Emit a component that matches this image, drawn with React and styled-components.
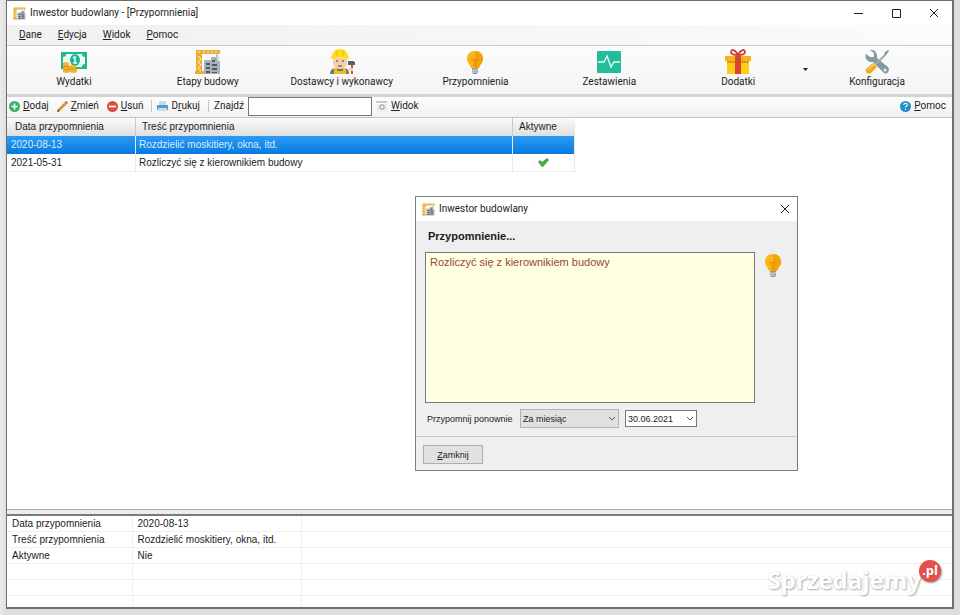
import React, { useState } from 'react';
import styled, { createGlobalStyle } from 'styled-components';

const GlobalStyle = createGlobalStyle`
  * {
    box-sizing: border-box;
  }
  body {
    margin: 0;
    background: #e3e3e3;
    color: #1c1c1c;
    font: 10px/16px "Liberation Sans", Arial, sans-serif;
  }
  button, input, select, textarea {
    font: inherit;
    color: inherit;
    margin: 0;
  }
`

const Desktop = styled.div`
  display: flex;
  min-height: 100vh;
  padding: 0 6px 6px;
  background: linear-gradient(90deg, #ececec, #dedede 6px, #dedede);
`

const AppWindow = styled.div`
  position: relative;
  flex: 1;
  display: flex;
  flex-direction: column;
  background: #fff;
  border: 1px solid #6f6f6f;
  border-width: 1px 2px 2px 1px;
`

const TitleBar = styled.header`
  display: flex;
  align-items: center;
  height: 24px;
  padding: 0 1px 0 6px;
  gap: 4px;
  background: #fff;
  font: 10px/16px Roboto, sans-serif;
`

const Title = styled.h1`
  flex: 1;
  margin: 0;
  font: inherit;
`

const CaptionButton = styled.button`
  display: flex;
  align-items: center;
  justify-content: center;
  width: ${props => props.$width || 34}px;
  height: 24px;
  padding: 0;
  border: 0;
  background: none;
`

const MenuBar = styled.nav`
  display: flex;
  align-items: center;
  height: 20px;
  padding-left: 12px;
  gap: 16px;
  background: linear-gradient(90deg, #f1f1f1, #fbfbfb);
  font: 10px/16px Roboto, sans-serif;
`

const MenuItem = styled.button`
  padding: 0;
  border: 0;
  background: none;
`

const Toolbar = styled.div`
  display: grid;
  grid-template-columns: repeat(7, 1fr);
  height: 52px;
  padding-right: 8px;
  border-top: 1px solid #c9c9c9;
  border-bottom: 3px solid #d3d3d3;
  background: linear-gradient(#fcfcfc, #f4f4f4);
`

const ToolItem = styled.div`
  display: flex;
`

const ToolButton = styled.button`
  flex: 1;
  display: flex;
  flex-direction: column;
  align-items: center;
  padding: 3px 0 0;
  border: 0;
  background: none;
  font: 10px/14px Roboto, sans-serif;
  white-space: nowrap;
`

const DropButton = styled.button`
  width: 10px;
  padding: 0 0 5px;
  border: 0;
  background: none;
`

const ActionBar = styled.div`
  display: flex;
  align-items: center;
  height: 21px;
  padding: 0 6px 2px 2px;
  border-bottom: 1px solid #c4c4c4;
  background: linear-gradient(#fdfdfd, #f1f1f1);
  font: 10px/16px Roboto, sans-serif;
`

const ActionButton = styled.button`
  display: flex;
  align-items: center;
  gap: 3px;
  padding: 0;
  margin-right: ${props => props.$last ? 0 : 8}px;
  margin-left: ${props => props.$end ? 'auto' : 0};
  border: 0;
  background: none;
`

const Divider = styled.span`
  width: 1px;
  height: 12px;
  margin-right: 5px;
  background: #c6c6c6;
`

const FindLabel = styled.label`
  margin-right: 4px;
`

const FindInput = styled.input`
  width: 124px;
  height: 19px;
  margin-right: 4px;
  padding: 0 3px;
  border: 1px solid #777;
  background: #fff;
`

const ListPane = styled.main`
  flex: 1;
  border-bottom: 1px solid #aaa;
`

const List = styled.table`
  width: 568px;
  table-layout: fixed;
  border-collapse: separate;
  border-spacing: 0;
`

const Col = styled.col`
  width: ${props => props.$width}px;
`

const HeadCell = styled.th`
  height: 18px;
  padding: 0 6px;
  border-right: 1px solid #c8c8c8;
  background: linear-gradient(#fafafa, #dfdfdf);
  font-weight: normal;
  text-align: left;
  &:first-child {
    padding-left: 8px;
  }
  &:last-child {
    border-right: 0;
  }
`

const Row = styled.tr`
  color: ${props => props.$selected ? '#d5edff' : 'inherit'};
  background: ${props => props.$selected ? 'linear-gradient(#2b9bf5, #087adf)' : '#fff'};
`

const Cell = styled.td`
  height: 18px;
  padding: 0 3px 0 ${props => props.$first ? 4 : 3}px;
  border-right: 1px solid #e9e9e9;
  border-bottom: ${props => props.$selected ? 0 : '1px solid #f0f0f0'};
  text-align: ${props => props.$center ? 'center' : 'left'};
  svg {
    display: block;
    margin: 0 auto;
  }
`

const Splitter = styled.div`
  height: 4px;
  background: #ededed;
`

const Details = styled.table`
  width: 100%;
  table-layout: fixed;
  border-collapse: collapse;
  border-top: 2px solid #7a7a7a;
  background: #fff;
`

const DetailCell = styled.td`
  height: 16px;
  padding: 0 5px;
  line-height: 15px;
  border-right: 1px solid #f0f0f0;
  border-bottom: 1px solid #f0f0f0;
  &:last-child {
    border-right: 0;
  }
  tr:last-child & {
    height: 12px;
    border-bottom: 0;
  }
`

const Dialog = styled.section`
  position: absolute;
  left: 408px;
  top: 195px;
  width: 383px;
  border: 1px solid #7c7c7c;
  background: #efefef;
`

const DialogTitle = styled.header`
  display: flex;
  align-items: center;
  height: 24px;
  padding-left: 6px;
  gap: 4px;
  background: #fff;
  font: 10px/16px Roboto, sans-serif;
`

const DialogBody = styled.div`
  padding: 7px 15px 8px 9px;
`

const Heading = styled.h2`
  margin: 0 0 8px;
  padding-left: 3px;
  font-size: 11px;
  line-height: 16px;
`

const Message = styled.div`
  display: flex;
  gap: 9px;
`

const MessageText = styled.textarea`
  flex: 1;
  display: block;
  height: 151px;
  padding: 1px 4px;
  border: 1px solid #777;
  background: #ffffe1;
  color: #99463a;
  font-size: 11px;
  outline: 0;
  resize: none;
`

const RemindRow = styled.div`
  display: flex;
  align-items: center;
  margin-top: 6px;
  padding-left: 2px;
  font-size: 9px;
`

const RemindLabel = styled.label`
  flex: 0 0 93px;
  white-space: nowrap;
`

const SelectBox = styled.div`
  display: grid;
  align-items: center;
  width: ${props => props.$width}px;
  margin-right: 6px;
  > * {
    grid-area: 1 / 1;
  }
  svg {
    justify-self: end;
    margin-right: 3px;
    pointer-events: none;
  }
`

const Select = styled.select`
  width: 100%;
  height: ${props => props.$plain ? 17 : 19}px;
  padding: 0 2px;
  border: 1px solid ${props => props.$plain ? '#777' : '#b3b3b3'};
  border-radius: 0;
  background: ${props => props.$plain ? '#fff' : '#e1e1e1'};
  appearance: none;
`

const DialogFooter = styled.footer`
  padding: 8px 7px 6px;
  border-top: 1px solid #c6c6c6;
`

const CloseButton = styled.button`
  display: block;
  width: 60px;
  height: 19px;
  padding: 0;
  border: 1px solid #adadad;
  background: #e1e1e1;
  font-size: 9px;
`

const Watermark = styled.div`
  position: absolute;
  right: 11px;
  bottom: 10px;
  display: flex;
  color: #fff;
  font: bold 24px/34px "Open Sans", sans-serif;
  text-shadow: 1px 1px 2px #aaa, 0 0 1px #ccc;
`

const Badge = styled.span`
  width: 22px;
  height: 22px;
  margin: -3px 0 0 -2px;
  border-radius: 50%;
  background: #e5504a;
  box-shadow: 1px 1px 2px #999;
  font-size: 13px;
  line-height: 20px;
  text-align: center;
  text-shadow: none;
`

const Crane = ({ size }) => (
  <svg width={size} height={size} viewBox="0 0 26 26" aria-hidden="true">
    <path d="M9 11h7V8h6v4h3v13H9z" fill="#a9b2b9" />
    <path d="M11 14h4v2h-4zm6-3h3v2h-3zm0 4h5v2h-5zm-6 3h4v2h-4zm6 1h5v2h-5zm-6 3h4v2h-4zm6 1h5v1h-5z" fill="#4d5963" />
    <path d="M1 1h24v4H7v17h2v3H0v-3h1z" fill="#e8ae36" />
    <path d="M3 3h2M8 3h2m2 0h2m2 0h2m2 0h2M3 7l3 3-3 3 3 3-3 3 3 3" stroke="#fff0bf" fill="none" />
    <path d="M22 5v3c2 0 2 3 0 3l-2-1" stroke="#929ba2" fill="none" />
  </svg>
)

const Money = () => (
  <svg width="28" height="26" viewBox="0 0 28 26" aria-hidden="true">
    <path d="M1 3h26v17H1z" fill="#21b592" />
    <path d="M6 5h16q0 3 3 3v7q-3 0-3 3H6q0-3-3-3V8q3 0 3-3z" fill="#eafff6" />
    <ellipse cx="15" cy="11" rx="5" ry="6" fill="#21b592" />
    <path d="M13 9l2-1v6m-2 0h4" stroke="#e5fff3" strokeWidth="1.5" fill="none" />
    <path d="M3 14q3-2 6 0v3q4-2 8 0v6q-4 2-7 0-4 2-7 0z" fill="#f4b62c" />
    <path d="M3 17q3 2 6 0m-6 3q3 2 7 0m0-1q4 2 7 0" stroke="#d78c19" fill="none" />
  </svg>
)

const Worker = () => (
  <svg width="26" height="26" viewBox="0 0 26 26" aria-hidden="true">
    <path d="M1 25q0-5 5-6h10q4 1 4 6z" fill="#687984" />
    <path d="M5 19h3v3h6v-3h3v6H5z" fill="#f3bd20" />
    <path d="M4 9h14v6q-2 5-7 5t-7-5z" fill="#f4cfad" />
    <path d="M1 10q1-2 2-3 1-7 8-7t8 7l2 3q-10-3-20 0z" fill="#ffdb16" />
    <path d="M8 2v5m6-5v5" stroke="#e8b708" />
    <path d="M7 12h2m4 0h2m-6 5h4" stroke="#54412f" />
    <path d="M23 15v10" stroke="#d8513f" strokeWidth="2" />
    <path d="M19 12h5l2 1v3h-7z" fill="#53616c" />
    <path d="M20 19h4v3h-4z" fill="#f4cfad" />
  </svg>
)

const Bulb = () => (
  <svg width="18" height="26" viewBox="0 0 18 26" aria-hidden="true">
    <path d="M9 2C4 2 1 5 1 10c0 4 3 5 4 9h8c1-4 4-5 4-9 0-5-3-8-8-8z" fill="#fbb615" />
    <path d="M9 2c5 0 8 3 8 8 0 4-3 5-4 9H9z" fill="#f6a208" />
    <path d="M5 10l3 1h2l3-1m-5 1v7m2-7v7" stroke="#e9850b" fill="none" />
    <path d="M6 19h6v4l-1 2H7l-1-2z" fill="#8d9b9e" />
    <path d="M6 21h6m-6 2h5" stroke="#d4dddd" />
  </svg>
)

const Pulse = () => (
  <svg width="26" height="26" viewBox="0 0 26 26" aria-hidden="true">
    <rect x="1" y="2" width="24" height="22" rx="1" fill="#23bd9b" />
    <path d="M2 13h6l3-6 4 11 3-5h6" stroke="#e4fff7" strokeWidth="1.4" fill="none" />
  </svg>
)

const Gift = () => (
  <svg width="28" height="26" viewBox="0 0 28 26" aria-hidden="true">
    <path d="M3 12h22v13H3z" fill="#ffcd14" />
    <path d="M1 7h26v5H1z" fill="#f2b51a" />
    <path d="M3 12h22v2H3z" fill="#dc9813" />
    <path d="M11 7h6v18h-6z" fill="#d94435" />
    <path d="M14 6C11 0 7 0 7 3c0 3 4 3 7 3zm0 0c3-6 7-6 7-3 0 3-4 3-7 3z" stroke="#ca4337" strokeWidth="1.8" fill="none" />
  </svg>
)

const Tools = () => (
  <svg width="26" height="26" viewBox="0 0 26 26" aria-hidden="true">
    <path d="M6 1l4 3v4L6 8 2 5c-2 4 2 9 7 8l10 10c3 4 8-1 5-5L13 9c1-5-3-9-7-8z" fill="#849aa0" />
    <circle cx="21" cy="21" r="1.5" fill="#e8eeee" />
    <path d="M12 15L22 5" stroke="#9daeb1" strokeWidth="2" />
    <path d="M20 4l4-3 1 1-3 4z" fill="#819499" />
    <path d="M9 14l4 4-6 6q-3 2-5-1-1-2 1-4z" fill="#f5a81f" />
    <path d="M10 15l-6 6" stroke="#ffd05b" strokeWidth="1.5" />
  </svg>
)

const RoundIcon = ({ color, children }) => (
  <svg width="11" height="11" viewBox="0 0 11 11" aria-hidden="true">
    <circle cx="5.5" cy="5.5" r="5.5" fill={color} />
    <g stroke="#fff" strokeWidth="1.6" fill="none">{children}</g>
  </svg>
)

const Plus = () => <RoundIcon color="#36b365"><path d="M5.5 2.5v6m-3-3h6" /></RoundIcon>
const Minus = () => <RoundIcon color="#de4c40"><path d="M2 5.5h7" /></RoundIcon>
const Help = () => (
  <RoundIcon color="#258dcc">
    <path d="M3.8 4c0-2.5 3.7-2.2 3.5 0 0 1-1.8 1-1.8 2.3M5.5 7.5v1.3" strokeWidth="1.1" />
  </RoundIcon>
)

const Pencil = () => (
  <svg width="11" height="11" viewBox="0 0 11 11" aria-hidden="true">
    <path d="M1 8L8 1l2 2-7 7-3 1z" fill="#e99032" />
    <path d="M8 1l1-1 2 2-1 1z" fill="#ad5945" />
    <path d="M1 8l2 2-3 1z" fill="#65584b" />
  </svg>
)

const Printer = () => (
  <svg width="11" height="12" viewBox="0 0 11 12" aria-hidden="true">
    <path d="M2 1h7v5H2z" fill="#c4dbe8" />
    <path d="M0 5h11v5H0z" fill="#4d9ed1" />
    <path d="M1 8h9v3H1z" fill="#c9dce6" />
  </svg>
)

const ViewIcon = () => (
  <svg width="12" height="13" viewBox="0 0 12 13" aria-hidden="true">
    <path d="M0 1h11v2H0z" fill="#c9c9c9" />
    <path d="M1 4h10v8H1z" fill="#ededed" />
    <circle cx="6" cy="7" r="2.2" fill="none" stroke="#aaa" strokeWidth="1.3" />
  </svg>
)

const Cross = () => (
  <svg width="10" height="10" viewBox="0 0 10 10" aria-hidden="true">
    <path d="M1 1l8 8m0-8L1 9" stroke="#222" fill="none" />
  </svg>
)

const Chevron = () => (
  <svg width="8" height="6" viewBox="0 0 8 6" aria-hidden="true">
    <path d="M1 1l3 3 3-3" stroke="#555" fill="none" />
  </svg>
)

const Check = () => (
  <svg width="11" height="9" viewBox="0 0 11 9" aria-label="Tak">
    <path d="M0 4l2-2 2 2 5-4 2 2-6 7H4z" fill="#4ba844" />
  </svg>
)

// puts the line under the access key
const Label = ({ text, at = 0 }) => (
  <span>{text.slice(0, at)}<u>{text[at]}</u>{text.slice(at + 1)}</span>
)

const tools = [
  { name: 'Wydatki', icon: <Money /> },
  { name: 'Etapy budowy', icon: <Crane size={26} /> },
  { name: 'Dostawcy i wykonawcy', icon: <Worker /> },
  { name: 'Przypomnienia', icon: <Bulb /> },
  { name: 'Zestawienia', icon: <Pulse /> },
  { name: 'Dodatki', icon: <Gift />, drop: true },
  { name: 'Konfiguracja', icon: <Tools /> },
]

const reminders = [
  { date: '2020-08-13', text: 'Rozdzielić moskitiery, okna, itd.', active: false },
  { date: '2021-05-31', text: 'Rozliczyć się z kierownikiem budowy', active: true },
]

const ReminderDialog = ({ onClose }) => (
  <Dialog role="dialog" aria-labelledby="dialog-title">
    <DialogTitle>
      <Crane size={13} />
      <Title as="span" id="dialog-title">Inwestor budowlany</Title>
      <CaptionButton $width={24} aria-label="Zamknij okno" onClick={onClose}><Cross /></CaptionButton>
    </DialogTitle>
    <DialogBody>
      <Heading id="reminder-heading">Przypomnienie...</Heading>
      <Message>
        <MessageText aria-labelledby="reminder-heading" readOnly value={reminders[1].text} />
        <Bulb />
      </Message>
      <RemindRow>
        <RemindLabel htmlFor="remind">Przypomnij ponownie</RemindLabel>
        <SelectBox $width={99}>
          <Select id="remind"><option>Za miesiąc</option></Select>
          <Chevron />
        </SelectBox>
        <SelectBox $width={72}>
          <Select $plain aria-label="Data"><option>30.06.2021</option></Select>
          <Chevron />
        </SelectBox>
      </RemindRow>
    </DialogBody>
    <DialogFooter>
      <CloseButton onClick={onClose}><Label text="Zamknij" /></CloseButton>
    </DialogFooter>
  </Dialog>
)

const App = () => {
  const [selected, setSelected] = useState(0)
  const [dialogOpen, setDialogOpen] = useState(true)
  const current = reminders[selected]
  const details = [
    ['Data przypomnienia', current.date],
    ['Treść przypomnienia', current.text],
    ['Aktywne', current.active ? 'Tak' : 'Nie'],
    ['', ''],
    ['', ''],
    ['', ''],
  ]

  return (
    <Desktop>
      <GlobalStyle />
      <AppWindow>
        <TitleBar>
          <Crane size={13} />
          <Title>Inwestor budowlany - [Przypomnienia]</Title>
          <CaptionButton aria-label="Minimalizuj">
            <svg width="9" height="9"><path d="M0 4.5h9" stroke="#222" /></svg>
          </CaptionButton>
          <CaptionButton aria-label="Maksymalizuj">
            <svg width="9" height="9"><path d="M.5.5h8v8h-8z" stroke="#222" fill="none" /></svg>
          </CaptionButton>
          <CaptionButton aria-label="Zamknij"><Cross /></CaptionButton>
        </TitleBar>
        <MenuBar>
          {['Dane', 'Edycja', 'Widok', 'Pomoc'].map(name => (
            <MenuItem key={name}><Label text={name} /></MenuItem>
          ))}
        </MenuBar>
        <Toolbar>
          {tools.map(tool => (
            <ToolItem key={tool.name}>
              <ToolButton>{tool.icon}{tool.name}</ToolButton>
              {tool.drop && (
                <DropButton aria-label="Więcej dodatków">
                  <svg width="5" height="3"><path d="M0 0h5L2.5 3z" fill="#222" /></svg>
                </DropButton>
              )}
            </ToolItem>
          ))}
        </Toolbar>
        <ActionBar>
          <ActionButton><Plus /><Label text="Dodaj" /></ActionButton>
          <ActionButton><Pencil /><Label text="Zmień" /></ActionButton>
          <ActionButton><Minus /><Label text="Usuń" /></ActionButton>
          <Divider />
          <ActionButton><Printer /><Label text="Drukuj" at={1} /></ActionButton>
          <Divider />
          <FindLabel htmlFor="find">Znajdź</FindLabel>
          <FindInput id="find" />
          <ActionButton><ViewIcon /><Label text="Widok" /></ActionButton>
          <ActionButton $end $last><Help /><Label text="Pomoc" /></ActionButton>
        </ActionBar>
        <ListPane>
          <List>
            <colgroup>
              <Col $width={129} />
              <Col $width={377} />
              <Col $width={62} />
            </colgroup>
            <thead>
              <tr>
                <HeadCell>Data przypomnienia</HeadCell>
                <HeadCell>Treść przypomnienia</HeadCell>
                <HeadCell>Aktywne</HeadCell>
              </tr>
            </thead>
            <tbody>
              {reminders.map((item, index) => {
                const on = index === selected
                return (
                  <Row key={item.date} $selected={on} onClick={() => setSelected(index)}>
                    <Cell $first $selected={on}>{item.date}</Cell>
                    <Cell $selected={on}>{item.text}</Cell>
                    <Cell $center $selected={on}>{item.active && <Check />}</Cell>
                  </Row>
                )
              })}
            </tbody>
          </List>
        </ListPane>
        <Splitter />
        <Details>
          <colgroup>
            <Col $width={125} />
            <Col $width={169} />
            <col />
          </colgroup>
          <tbody>
            {details.map(([name, value], index) => (
              <tr key={index}>
                <DetailCell>{name}</DetailCell>
                <DetailCell>{value}</DetailCell>
                <DetailCell />
              </tr>
            ))}
          </tbody>
        </Details>
        {dialogOpen && <ReminderDialog onClose={() => setDialogOpen(false)} />}
        <Watermark>Sprzedajemy<Badge>.pl</Badge></Watermark>
      </AppWindow>
    </Desktop>
  )
}

export default App;
